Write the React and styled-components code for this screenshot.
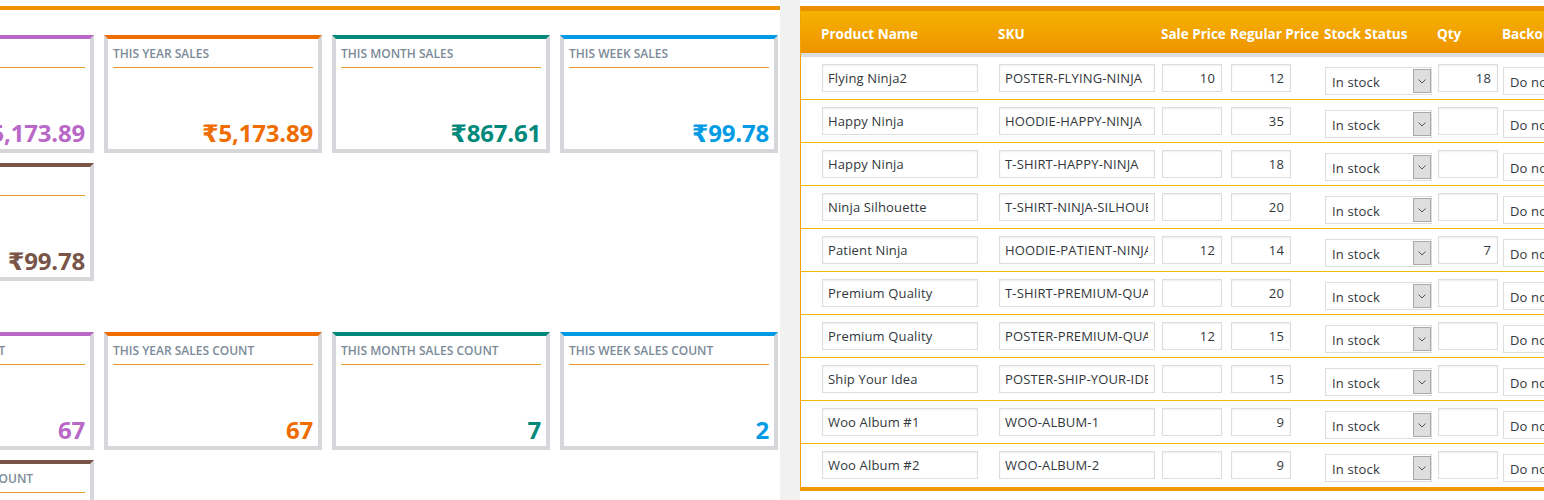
import React, { Component } from 'react'
import styled, { createGlobalStyle } from 'styled-components'

const GlobalStyle = createGlobalStyle`
  body {
    margin: 0;
    background: #fff;
    font-family: "Open Sans", "DejaVu Sans", sans-serif;
  }
`

const Page = styled.div`
  display: flex;
  height: 500px;
  overflow: hidden;
`

const LeftPane = styled.div`
  flex: none;
  width: 780px;
  padding-top: 6px;
  overflow: hidden;
`

const TopRule = styled.div`
  height: 4px;
  background: #ef9200;
`

const Cards = styled.div`
  margin-left: -124px;
  padding-top: 25px;
`

const CardGrid = styled.div`
  display: grid;
  grid-template-columns: repeat(4, 218px);
  gap: 10px;
  margin-bottom: 51px;
`

const Card = styled.div`
  box-sizing: border-box;
  height: 118px;
  display: flex;
  flex-direction: column;
  padding: 7px 5px 0;
  background: #fff;
  border: 4px solid #d5d7da;
  border-top-color: ${props => props.$color};
`

const CardTitle = styled.div`
  font-size: 12px;
  font-weight: 600;
  line-height: 16px;
  color: #7b8a98;
  white-space: nowrap;
  padding-bottom: 5px;
  border-bottom: 1px solid #e8982a;
`

const CardValue = styled.div`
  margin-top: auto;
  text-align: right;
  font-size: 24px;
  font-weight: 700;
  letter-spacing: -0.2px;
  line-height: 32px;
  color: ${props => props.$color};
`

const Divider = styled.div`
  flex: none;
  width: 20px;
  background: #f1f1f1;
`

const RightPane = styled.div`
  flex: 1;
  min-width: 0;
  padding-top: 6px;
  overflow: hidden;
`

const Panel = styled.div`
  width: 900px;
  border-left: 1px solid #f2a200;
  border-top: 5px solid #eb8e00;
  border-bottom: 4px solid #f09800;
`

const columns = '177px 163px 69px 94px 113px 65px 200px'

const HeadRow = styled.div`
  box-sizing: border-box;
  display: grid;
  grid-template-columns: ${columns};
  height: 46px;
  padding: 14px 0 0 20px;
  background: linear-gradient(#f6b200, #ee9300);
  border-bottom: 4px solid #dddddd;
`

const HeadCell = styled.div`
  font-size: 13.5px;
  font-weight: 700;
  line-height: 18px;
  color: #fff;
  white-space: nowrap;
`

const Row = styled.div`
  box-sizing: border-box;
  display: grid;
  grid-template-columns: ${columns};
  align-items: start;
  height: 43px;
  padding: 7px 0 0 21px;
  border-bottom: 1px solid #f5b800;

  &:last-child {
    border-bottom: none;
  }
`

const Field = styled.input`
  box-sizing: border-box;
  width: ${props => props.$width}px;
  height: 28px;
  margin: 0;
  padding: 0 6px 0 5px;
  border: 1px solid #dddddd;
  box-shadow: inset 0 1px 2px rgba(0, 0, 0, 0.07);
  background: #fff;
  font-family: "Open Sans", sans-serif;
  font-size: 13px;
  letter-spacing: 0.15px;
  color: #32373c;
  text-align: ${props => (props.$number ? 'right' : 'left')};
  outline: none;
`

const SelectBox = styled.div`
  box-sizing: border-box;
  display: flex;
  align-items: stretch;
  width: ${props => props.$width}px;
  height: 28px;
  margin-top: 3px;
  border: 1px solid #dddddd;
  background: #fff;
`

const SelectText = styled.div`
  flex: 1;
  padding: 5px 0 0 6px;
  font-size: 13px;
  letter-spacing: 0.15px;
  line-height: 18px;
  color: #32373c;
  white-space: nowrap;
  overflow: hidden;
`

const SelectArrow = styled.div`
  flex: none;
  display: flex;
  align-items: center;
  justify-content: center;
  box-sizing: border-box;
  width: 18px;
  margin: 1px 0;
  background: #dedede;
  border: 1px solid #a9a9a9;
`

const Chevron = () => (
  <svg width="8" height="5" viewBox="0 0 8 5">
    <path d="M0.5 0.5 L4 4 L7.5 0.5" fill="none" stroke="#555" strokeWidth="1" />
  </svg>
)

const Select = ({ width, value, arrow }) => (
  <SelectBox $width={width}>
    <SelectText>{value}</SelectText>
    {arrow && (
      <SelectArrow>
        <Chevron />
      </SelectArrow>
    )}
  </SelectBox>
)

export default class App extends Component {

  state = {
    sales: [
      { title: 'TOTAL SALES', value: '₹5,173.89', color: '#ba68c8' },
      { title: 'THIS YEAR SALES', value: '₹5,173.89', color: '#ef6c00' },
      { title: 'THIS MONTH SALES', value: '₹867.61', color: '#00897b' },
      { title: 'THIS WEEK SALES', value: '₹99.78', color: '#039be5' },
      { title: 'YESTERDAY SALES', value: '₹99.78', color: '#795548' },
    ],
    counts: [
      { title: 'TOTAL SALES COUNT', value: '67', color: '#ba68c8' },
      { title: 'THIS YEAR SALES COUNT', value: '67', color: '#ef6c00' },
      { title: 'THIS MONTH SALES COUNT', value: '7', color: '#00897b' },
      { title: 'THIS WEEK SALES COUNT', value: '2', color: '#039be5' },
      { title: 'YESTERDAY SALES COUNT', value: '2', color: '#795548' },
    ],
    products: [
      ['Flying Ninja2', 'POSTER-FLYING-NINJA', '10', '12', '18'],
      ['Happy Ninja', 'HOODIE-HAPPY-NINJA', '', '35', ''],
      ['Happy Ninja', 'T-SHIRT-HAPPY-NINJA', '', '18', ''],
      ['Ninja Silhouette', 'T-SHIRT-NINJA-SILHOUETTE', '', '20', ''],
      ['Patient Ninja', 'HOODIE-PATIENT-NINJA', '12', '14', '7'],
      ['Premium Quality', 'T-SHIRT-PREMIUM-QUALITY', '', '20', ''],
      ['Premium Quality', 'POSTER-PREMIUM-QUALITY', '12', '15', ''],
      ['Ship Your Idea', 'POSTER-SHIP-YOUR-IDEA', '', '15', ''],
      ['Woo Album #1', 'WOO-ALBUM-1', '', '9', ''],
      ['Woo Album #2', 'WOO-ALBUM-2', '', '9', ''],
    ]
  }

  renderCards(list) {
    return (
      <CardGrid>
        {list.map((card, i) => (
          <Card key={i} $color={card.color}>
            <CardTitle>{card.title}</CardTitle>
            <CardValue $color={card.color}>{card.value}</CardValue>
          </Card>
        ))}
      </CardGrid>
    )
  }

  render() {
    const heads = ['Product Name', 'SKU', 'Sale Price', 'Regular Price', 'Stock Status', 'Qty', 'Backorders']
    return (
      <Page>
        <GlobalStyle />
        <LeftPane>
          <TopRule />
          <Cards>
            {this.renderCards(this.state.sales)}
            {this.renderCards(this.state.counts)}
          </Cards>
        </LeftPane>
        <Divider />
        <RightPane>
          <Panel>
            <HeadRow>
              {heads.map(h => <HeadCell key={h}>{h}</HeadCell>)}
            </HeadRow>
            {this.state.products.map((p, i) => (
              <Row key={i}>
                <Field $width={156} defaultValue={p[0]} readOnly />
                <Field $width={156} defaultValue={p[1]} readOnly />
                <Field $width={60} $number defaultValue={p[2]} readOnly />
                <Field $width={60} $number defaultValue={p[3]} readOnly />
                <Select width={107} value="In stock" arrow />
                <Field $width={60} $number defaultValue={p[4]} readOnly />
                <Select width={130} value="Do not allow" arrow />
              </Row>
            ))}
          </Panel>
        </RightPane>
      </Page>
    )
  }
}
